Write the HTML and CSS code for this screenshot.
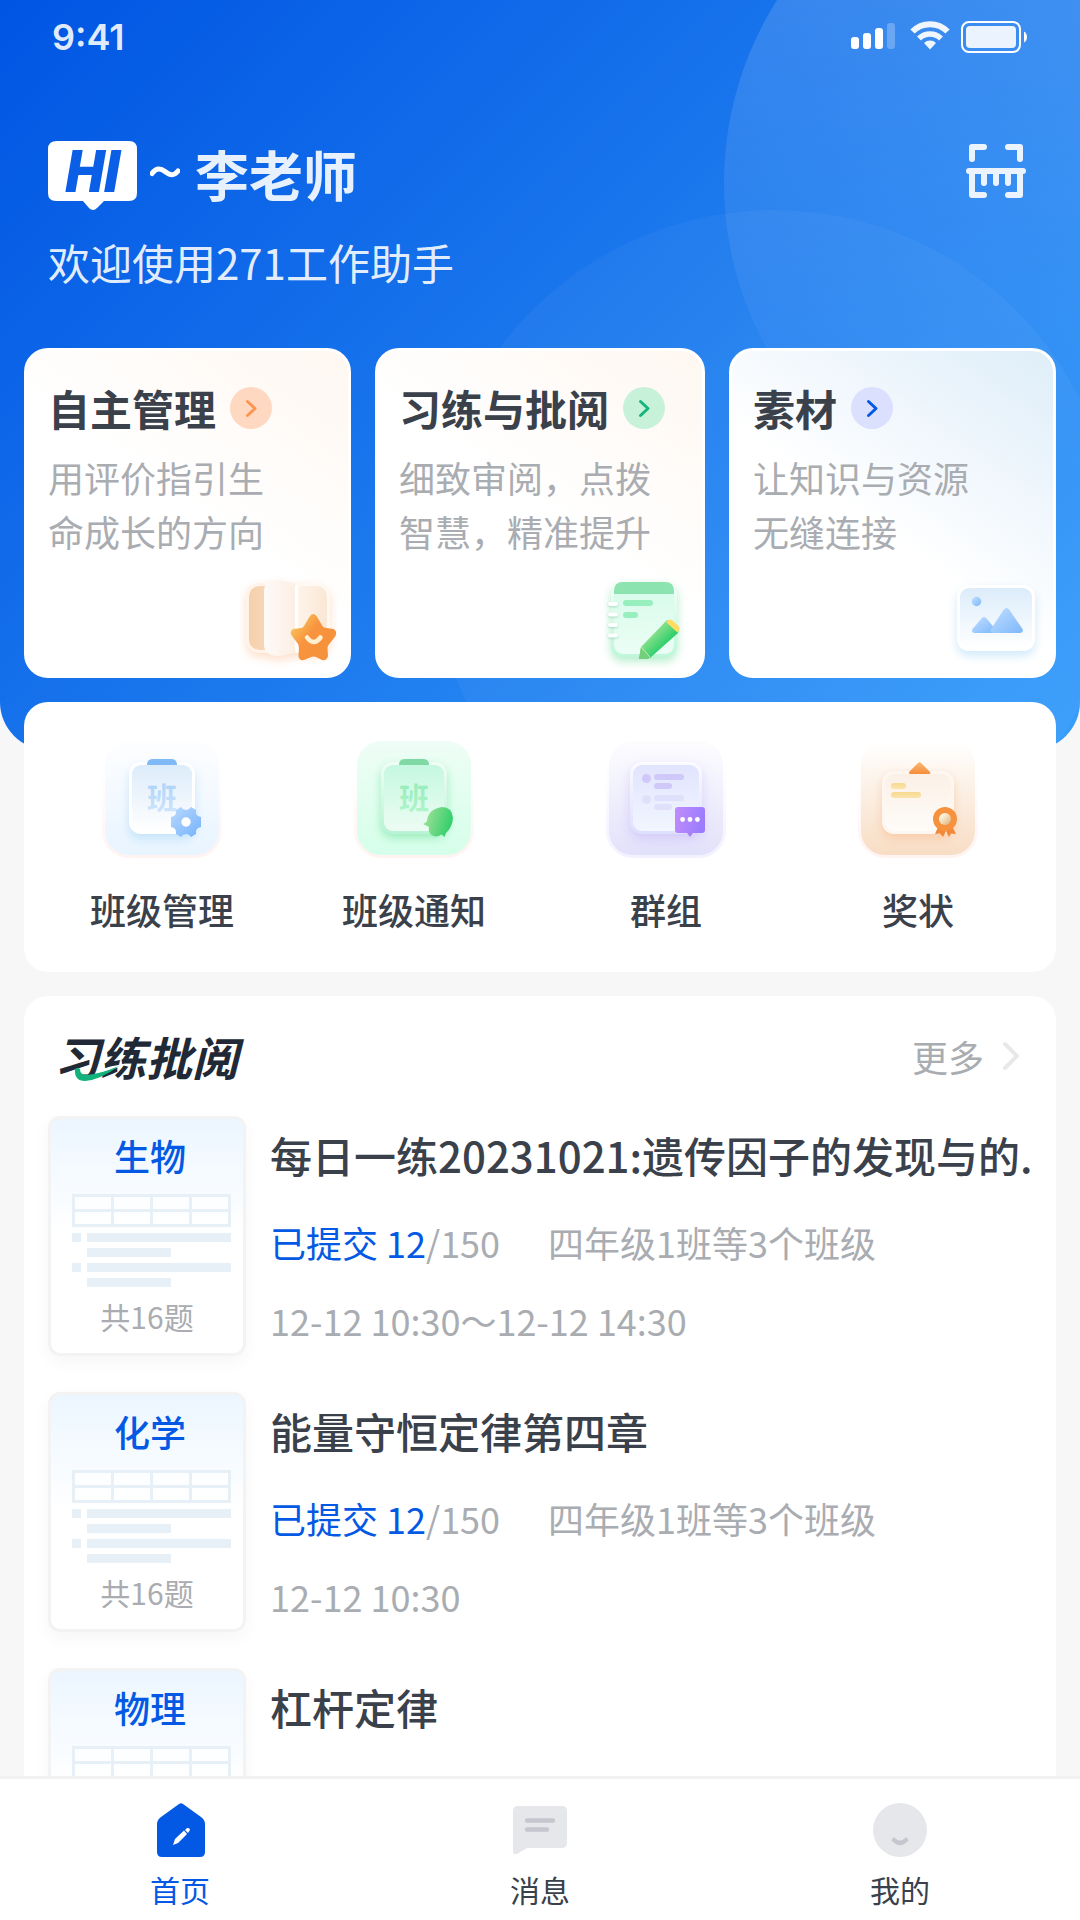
FILE: index.html
```html
<!DOCTYPE html>
<html lang="zh-CN">
<head>
<meta charset="utf-8">
<meta name="viewport" content="width=device-width, initial-scale=1">
<title>271工作助手</title>
<link rel="stylesheet" href="styles.css">
</head>
<body>
<div class="app">
  <main class="screen">
    <header class="hero">
      <div class="status">
        <span class="status-time">9:41</span>
        <svg class="status-icons" viewBox="0 0 178 36" aria-hidden="true">
          <g fill="#fff">
            <rect x="1" y="18" width="8" height="12" rx="3"/>
            <rect x="13" y="14" width="8" height="16" rx="3"/>
            <rect x="25" y="9" width="8" height="21" rx="3"/>
            <rect x="37" y="4" width="8" height="26" rx="3" opacity=".25"/>
          </g>
          <g fill="none" stroke="#fff" stroke-opacity=".92">
            <path d="M62.500 12.500a24.500 24.500 0 0 1 35 0" stroke-width="6"/>
            <path d="M69 19.500a15.500 15.500 0 0 1 22 0" stroke-width="5.500"/>
          </g>
          <path d="M74 24a8.500 8.500 0 0 1 12 0L80 30.500z" fill="#fff" fill-opacity=".92"/>
          <rect x="112" y="3" width="58" height="30" rx="7" fill="none" stroke="#fff" stroke-width="2"/>
          <rect x="116" y="7" width="50" height="22" rx="4" fill="#fff" fill-opacity=".9"/>
          <path d="M174 12.500q3 2 3 5.500t-3 5.500z" fill="#fff"/>
        </svg>
      </div>

      <div class="greeting">
        <svg class="hi" viewBox="0 0 90 72" role="img" aria-label="HI">
          <path d="M9 3h72q8 0 8 8v44q0 8-8 8H56l-7 7q-4 4-8 0l-6-7H8q-8 0-8-8V11q0-8 9-8z" fill="#fff"/>
          <text class="hi-text" x="18" y="53">HI</text>
        </svg>
        <svg class="tilde" viewBox="0 0 30 18" aria-hidden="true"><path d="M2 8.500C6 3 10 2.500 15 6.500S24 11 28 6" fill="none" stroke="#fff" stroke-width="5" stroke-linecap="round"/></svg>
        <h1 class="name">李老师</h1>
        <button class="scan" type="button" aria-label="扫一扫">
          <svg viewBox="0 0 60 60" fill="none" stroke="#fff" stroke-opacity=".9" stroke-width="6" stroke-linecap="round" stroke-linejoin="round"><path d="M6 15V3h12M42 3h12v12M3 27h54M6 28v23h12M42 51h12V28M18 28v11M30 28v11M42 28v11"/></svg>
        </button>
      </div>
      <p class="welcome">欢迎使用271工作助手</p>

      <nav class="cards" aria-label="功能">
        <a class="card card-warm" href="#manage">
          <span class="card-head"><span class="card-title">自主管理</span>
            <svg class="go go-orange" viewBox="0 0 42 42" aria-hidden="true"><circle cx="21" cy="21" r="21"/><path d="M17.500 14.500l7.500 7-7.500 7"/></svg></span>
          <span class="card-desc">用评价指引生<br>命成长的方向</span>
          <svg class="card-icon" viewBox="0 0 108 108" aria-hidden="true">
            <defs>
              <linearGradient id="book-back"><stop stop-color="#f5cfaa"/><stop offset="1" stop-color="#f9dfc8"/></linearGradient>
              <linearGradient id="book-page"><stop stop-color="#fdfaf8"/><stop offset="1" stop-color="#fdeee3"/></linearGradient>
              <linearGradient id="book-right"><stop stop-color="#fffaf5"/><stop offset="1" stop-color="#fae6d3"/></linearGradient>
              <linearGradient id="star" x1="0" y1=".2" x2=".6" y2=".7"><stop stop-color="#f8c960"/><stop offset=".6" stop-color="#f8943f"/><stop offset="1" stop-color="#f7923c"/></linearGradient>
            </defs>
            <g class="shadow-orange">
              <rect x="7.500" y="17.500" width="40" height="67" rx="12" fill="url(#book-back)" stroke="#fff3ea" stroke-width="3"/>
              <rect x="45" y="17.500" width="43.500" height="67" rx="12" fill="url(#book-right)" stroke="#fff9f4" stroke-width="3"/>
              <path d="M24 25q0-12 12-12 5 0 20 4v68q-12 4-18 4-14 0-14-12z" fill="url(#book-page)"/>
            </g>
            <path d="M56.500 18v66" stroke="#fff" stroke-width="3"/>
            <path d="M70 49q3-4 6.500 0l6 10q1 2 4 2l7 1q4 2 2 7l-7 9q-1 1-1 4l.5 7q-1 5-6 4l-6-3q-2.500-1-5 0l-7 3q-5 1-5.500-4l.5-8q0-2-1-4l-6-8q-3-4 1-7l8-1q2 0 3-2z" fill="url(#star)"/>
            <path d="M67 70.500q6.500 9 13.500 0" fill="none" stroke="#fff0d2" stroke-width="4.500" stroke-linecap="round"/>
          </svg>
        </a>
        <a class="card card-warm" href="#practice">
          <span class="card-head"><span class="card-title">习练与批阅</span>
            <svg class="go go-green" viewBox="0 0 42 42" aria-hidden="true"><circle cx="21" cy="21" r="21"/><path d="M17.500 14.500l7.500 7-7.500 7"/></svg></span>
          <span class="card-desc">细致审阅，点拨<br>智慧，精准提升</span>
          <svg class="card-icon" viewBox="0 0 108 108" aria-hidden="true">
            <defs>
              <linearGradient id="note" x2="0" y2="1"><stop stop-color="#d5fbea"/><stop offset="1" stop-color="#ecfdf5"/></linearGradient>
              <linearGradient id="note-edge" x2="0" y2="1"><stop stop-color="#f4fff9"/><stop offset="1" stop-color="#bdf7d9"/></linearGradient>
              <linearGradient id="pencil" x1=".2" y1=".3" x2=".6" y2=".7"><stop stop-color="#a7e595"/><stop offset="1" stop-color="#2dcf6c"/></linearGradient>
            </defs>
            <rect class="shadow-green" x="17" y="15" width="66" height="75" rx="12" fill="url(#note-edge)"/>
            <rect x="20" y="15" width="60" height="72" rx="9" fill="url(#note)"/>
            <path d="M20 27v-3q0-9 9-9h42q9 0 9 9v3z" fill="#8de3b0"/>
            <g fill="#97efbd"><rect x="29" y="33" width="30" height="6" rx="3"/><rect x="29" y="45" width="15" height="6" rx="3"/></g>
            <g class="shadow-ring" fill="#fff"><rect x="14" y="35" width="10" height="4" rx="2"/><rect x="14" y="45.500" width="10" height="4" rx="2"/><rect x="14" y="56" width="10" height="4" rx="2"/><rect x="14" y="66.500" width="10" height="4" rx="2"/></g>
            <path d="M45 92l2-12 25-26q2-2 4 0l8 8q1 2 0 4L56 91z" fill="url(#pencil)"/>
            <path d="M45 92l2-12 9 10-2 2z" fill="#73cf7c"/>
            <path d="M47 80l9 10" stroke="#c4f0b5" stroke-width="1"/>
            <path d="M73 54q2-2.500 5-1l6.500 6q2 3 0 5l-1 1.500-11-10z" fill="#ffdc63"/>
          </svg>
        </a>
        <a class="card card-cool" href="#material">
          <span class="card-head"><span class="card-title">素材</span>
            <svg class="go go-blue" viewBox="0 0 42 42" aria-hidden="true"><circle cx="21" cy="21" r="21"/><path d="M17.500 14.500l7.500 7-7.500 7"/></svg></span>
          <span class="card-desc">让知识与资源<br>无缝连接</span>
          <svg class="card-icon" viewBox="0 0 108 108" aria-hidden="true">
            <defs>
              <linearGradient id="photo" x2="0" y2="1"><stop stop-color="#dcecfa"/><stop offset="1" stop-color="#fff"/></linearGradient>
              <linearGradient id="peak" x2="1" y2="1"><stop stop-color="#c2deff"/><stop offset="1" stop-color="#7db8fb"/></linearGradient>
            </defs>
            <rect class="shadow-blue" x="12" y="18" width="78" height="66" rx="12" fill="#fff"/>
            <rect x="15" y="21" width="72" height="60" rx="9" fill="url(#photo)"/>
            <g fill="url(#peak)">
              <circle cx="31.500" cy="34.500" r="4.700"/>
              <path d="M36 52q3-4 6 0l9 11q1 3-2 3H29q-3-1-1.500-4z"/>
              <path d="M58.500 43q3-4 6 0l13 19q1.500 3-2 4H48q-4-1-2-4z"/>
            </g>
          </svg>
        </a>
      </nav>
    </header>

    <nav class="panel quick" aria-label="快捷入口">
      <a class="quick-item" href="#class">
        <svg class="tile" viewBox="0 0 120 120" aria-hidden="true">
          <defs>
            <linearGradient id="t1" x2="0" y2="1"><stop stop-color="#fefeff"/><stop offset="1" stop-color="#e8f4ff"/></linearGradient>
            <linearGradient id="rim" x2="0" y2="1"><stop offset=".3" stop-color="#fff3f1" stop-opacity="0"/><stop offset="1" stop-color="#fff3f1"/></linearGradient>
            <linearGradient id="ink1" x2="0" y2="1"><stop stop-color="#a5cdf8"/><stop offset="1" stop-color="#d5e8fc"/></linearGradient>
            <linearGradient id="gear" x2="1" y2="1"><stop stop-color="#bad9ff"/><stop offset="1" stop-color="#74b2fb"/></linearGradient>
          </defs>
          <rect width="120" height="120" rx="27" fill="url(#rim)"/>
          <rect x="3" y="3" width="114" height="114" rx="24" fill="url(#t1)"/>
          <rect class="shadow-blue" x="27" y="24" width="66" height="72" rx="12" fill="#fff"/>
          <path d="M45 27q0-6 6-6h18q6 0 6 6z" fill="#80b9f8"/>
          <rect x="30" y="27" width="60" height="66" rx="9" fill="url(#photo)"/>
          <text class="tile-char" x="45" y="71" fill="url(#ink1)">班</text>
          <path d="M79 69q2 3 5 3t5-3l5 3q-1 6 5 7v10q-6 1-5 7l-5 3q-2-3-5-3t-5 3l-5-3q1-6-5-7V79q6-1 5-7z" fill="url(#gear)"/>
          <circle cx="84" cy="84" r="4.700" fill="#fff"/>
        </svg>
        <span>班级管理</span>
      </a>
      <a class="quick-item" href="#notice">
        <svg class="tile" viewBox="0 0 120 120" aria-hidden="true">
          <defs>
            <linearGradient id="t2" x2="0" y2="1"><stop stop-color="#effdf6"/><stop offset="1" stop-color="#d5ffe9"/></linearGradient>
            <linearGradient id="board2" x2="0" y2="1"><stop stop-color="#c5f8e0"/><stop offset="1" stop-color="#edfcf4"/></linearGradient>
            <linearGradient id="edge2" x2="0" y2="1"><stop stop-color="#f2fdf7"/><stop offset="1" stop-color="#b8f3d5"/></linearGradient>
            <linearGradient id="ink2" x2="0" y2="1"><stop stop-color="#8deab5"/><stop offset="1" stop-color="#b5f6d0"/></linearGradient>
            <linearGradient id="bell" x2="1" y2=".3"><stop offset=".2" stop-color="#95df93"/><stop offset="1" stop-color="#35cf6d"/></linearGradient>
          </defs>
          <rect width="120" height="120" rx="27" fill="url(#rim)"/>
          <rect x="3" y="3" width="114" height="114" rx="24" fill="url(#t2)"/>
          <rect class="shadow-green" x="27" y="24" width="66" height="72" rx="12" fill="url(#edge2)"/>
          <path d="M45 27q0-6 6-6h18q6 0 6 6z" fill="#80d9a4"/>
          <rect x="30" y="27" width="60" height="66" rx="9" fill="url(#board2)"/>
          <text class="tile-char" x="45" y="71" fill="url(#ink2)">班</text>
          <path d="M88 69q10 0 11 11-.5 9-7 15l-1.500 4-3-2.500q-6 4-10.500 0-3-3-2-7.500l-6-3q3-1 4-3 1-12 15-14z" fill="url(#bell)"/>
        </svg>
        <span>班级通知</span>
      </a>
      <a class="quick-item" href="#group">
        <svg class="tile" viewBox="0 0 120 120" aria-hidden="true">
          <defs>
            <linearGradient id="t3" x2="0" y2="1"><stop stop-color="#fdfdff"/><stop offset="1" stop-color="#e2e1fa"/></linearGradient>
            <linearGradient id="rim3" x2="0" y2="1"><stop offset=".2" stop-color="#f3f1ff" stop-opacity="0"/><stop offset="1" stop-color="#f3f1ff"/></linearGradient>
            <linearGradient id="board3" x2="0" y2="1"><stop stop-color="#e1e4fd"/><stop offset="1" stop-color="#f1f6ff"/></linearGradient>
            <linearGradient id="edge3" x2="0" y2="1"><stop stop-color="#fcfcff"/><stop offset="1" stop-color="#dedffd"/></linearGradient>
            <linearGradient id="bubble" x2="1" y2=".3"><stop stop-color="#c28dfa"/><stop offset="1" stop-color="#9b7cfd"/></linearGradient>
          </defs>
          <rect width="120" height="120" rx="27" fill="url(#rim3)"/>
          <rect x="3" y="3" width="114" height="114" rx="24" fill="url(#t3)"/>
          <rect class="shadow-violet" x="24" y="24" width="72" height="72" rx="12" fill="url(#edge3)"/>
          <rect x="27" y="27" width="66" height="66" rx="9" fill="url(#board3)"/>
          <g fill="#d0c8f8"><circle cx="40.500" cy="40.500" r="4.500"/><rect x="48" y="36" width="30" height="6" rx="3"/><rect x="48" y="45" width="18" height="6" rx="3"/></g>
          <g fill="#e0e0fb"><circle cx="40.500" cy="61.500" r="4.500"/><rect x="48" y="57" width="30" height="6" rx="3"/><rect x="48" y="66" width="18" height="6" rx="3"/></g>
          <path d="M72 69h24q3 0 3 3v20q0 3-3 3h-9l-3 4-3-4h-9q-3 0-3-3V72q0-3 3-3z" fill="url(#bubble)"/>
          <g fill="#fff"><circle cx="76.600" cy="81.500" r="2.400"/><circle cx="84" cy="81.500" r="2.400"/><circle cx="91.400" cy="81.500" r="2.400"/></g>
        </svg>
        <span>群组</span>
      </a>
      <a class="quick-item" href="#award">
        <svg class="tile" viewBox="0 0 120 120" aria-hidden="true">
          <defs>
            <linearGradient id="t4" x2="0" y2="1"><stop stop-color="#fff"/><stop offset="1" stop-color="#f8ddc4"/></linearGradient>
            <linearGradient id="board4" x2="0" y2="1"><stop stop-color="#fcf0e6"/><stop offset="1" stop-color="#fefcf9"/></linearGradient>
            <linearGradient id="hook" x2="0" y2="1"><stop stop-color="#f9b777"/><stop offset="1" stop-color="#f58d38"/></linearGradient>
            <linearGradient id="gold" x2="0" y2="1"><stop stop-color="#f8d98f"/><stop offset="1" stop-color="#fae3ad"/></linearGradient>
            <linearGradient id="coin" x2="1" y2="1"><stop offset=".2" stop-color="#fff7e4"/><stop offset="1" stop-color="#dcae71"/></linearGradient>
          </defs>
          <rect width="120" height="120" rx="27" fill="url(#rim)"/>
          <rect x="3" y="3" width="114" height="114" rx="24" fill="url(#t4)"/>
          <rect class="shadow-orange" x="24" y="33" width="72" height="63" rx="12" fill="#fef7f1"/>
          <rect x="27" y="36" width="66" height="57" rx="9" fill="url(#board4)"/>
          <path d="M60 25q1.500-1.500 3 0l9 9q1 2-1 2H52q-2-1-.5-2.500z" fill="url(#hook)"/>
          <g fill="url(#gold)"><rect x="33" y="45" width="15" height="6" rx="3"/><rect x="33" y="54" width="30" height="6" rx="3"/></g>
          <path d="M80 89l-3 7 5-.5 3 3.500 3-6 3 6 2-3.500 5 .5-4-8z" fill="#f2893a"/>
          <circle cx="87" cy="81" r="12" fill="#f6923e"/>
          <circle cx="87" cy="81" r="6" fill="url(#coin)"/>
        </svg>
        <span>奖状</span>
      </a>
    </nav>

    <section class="panel reviews" aria-labelledby="reviews-title">
      <div class="reviews-head">
        <h2 class="reviews-title" id="reviews-title">习练批阅
          <svg class="swoosh" viewBox="0 0 45 16" aria-hidden="true"><path d="M1 4q3-2 5 0 0 6 7 6Q26 9 45 1 26 15 11 16 0 16 1 4z" fill="#12b27c"/></svg>
        </h2>
        <a class="more" href="#more">更多
          <svg viewBox="0 0 18 30" aria-hidden="true"><path d="M3 3l12 12L3 27" fill="none" stroke="#e8e8e8" stroke-width="4" stroke-linecap="round" stroke-linejoin="round"/></svg>
        </a>
      </div>
      <svg class="symbols" aria-hidden="true">
        <symbol id="sheet" viewBox="0 0 159 93">
          <path d="M1.500 1.500h156v30h-156zM1.500 16.500h156M40.500 1.500v30M79.500 1.500v30M118.500 1.500v30" fill="none" stroke="#e7eff7" stroke-width="3"/>
          <path d="M3 3h36v12H3zM42 3h36v12H42zM81 3h36v12H81zM120 3h36v12h-36zM3 18h36v12H3zM42 18h36v12H42zM81 18h36v12H81zM120 18h36v12h-36z" fill="#fff" fill-opacity=".5"/>
          <path d="M0 39h9v9H0zM15 39h144v9H15zM15 54h84v9H15zM0 69h9v9H0zM15 69h144v9H15zM15 84h84v9H15z" fill="#e7eff7"/>
        </symbol>
      </svg>
      <ul class="list">
        <li class="item">
          <div class="thumb"><span class="subject">生物</span><svg class="sheet" aria-hidden="true"><use href="#sheet"/></svg><span class="count">共16题</span></div>
          <div class="info">
            <h3 class="item-title">每日一练20231021:遗传因子的发现与的.</h3>
            <p class="meta"><span><span class="done">已提交 12</span>/150</span><span>四年级1班等3个班级</span></p>
            <p class="time">12-12 10:30～12-12 14:30</p>
          </div>
        </li>
        <li class="item">
          <div class="thumb"><span class="subject">化学</span><svg class="sheet" aria-hidden="true"><use href="#sheet"/></svg><span class="count">共16题</span></div>
          <div class="info">
            <h3 class="item-title">能量守恒定律第四章</h3>
            <p class="meta"><span><span class="done">已提交 12</span>/150</span><span>四年级1班等3个班级</span></p>
            <p class="time">12-12 10:30</p>
          </div>
        </li>
        <li class="item">
          <div class="thumb"><span class="subject">物理</span><svg class="sheet" aria-hidden="true"><use href="#sheet"/></svg></div>
          <div class="info">
            <h3 class="item-title">杠杆定律</h3>
          </div>
        </li>
      </ul>
    </section>
  </main>

  <nav class="tabs" aria-label="主导航">
    <a class="tab tab-active" href="#home" aria-current="page">
      <svg viewBox="0 0 54 54" aria-hidden="true"><path d="M26 1q2-1.500 4 0l18 13q4 3 4 7v28q0 5-5 5H9q-5 0-5-5V21q0-4 4-7z" fill="#0459e4"/><path d="M20 42l2-6 9-8.500 3 3.500-9 9zM32 27l2-2q3-.5 3 2l-2 3z" fill="#fff"/></svg>
      <span>首页</span>
    </a>
    <a class="tab" href="#message">
      <svg viewBox="0 0 54 54" aria-hidden="true"><path d="M5 3h44q5 0 5 5v32q0 5-5 5H14L4 51q-4 1-4-3V8q0-5 5-5z" fill="#e6e7eb"/><path d="M14 17.500h26M14 26.500h20" stroke="#c5c6ce" stroke-width="4.500" stroke-linecap="round"/></svg>
      <span>消息</span>
    </a>
    <a class="tab" href="#me">
      <svg viewBox="0 0 54 54" aria-hidden="true"><circle cx="27" cy="27" r="27" fill="#e6e7eb"/><path d="M21 37q6 6 12 0" fill="none" stroke="#c5c6ce" stroke-width="4.500" stroke-linecap="round"/></svg>
      <span>我的</span>
    </a>
  </nav>
</div>
</body>
</html>
```

FILE: styles.css
```css
* {
  box-sizing: border-box;
}

body,
h1,
h2,
h3,
p,
ul {
  margin: 0;
  padding: 0;
}

body {
  background: #f7f7f7;
  color: #3a414b;
  font-family: "Noto Sans CJK SC", "Noto Sans", sans-serif;
  font-size: 36px;
  line-height: 54px;
}

a {
  color: inherit;
  text-decoration: none;
}

svg {
  display: block;
  flex: none;
}

.app {
  display: flex;
  flex-direction: column;
  height: 100vh;
}

.screen {
  flex: 1;
  min-height: 0;
  overflow-y: auto;
  scrollbar-width: none;
}

/* Hero */
.hero {
  position: relative;
  overflow: hidden;
  padding: 0 24px 72px;
  border-radius: 0 0 48px 48px;
  background: linear-gradient(135deg, #0055e3 0%, #1b78ed 50%, #389efb 100%);
}

.hero::before,
.hero::after {
  content: "";
  position: absolute;
  width: 684px;
  height: 684px;
  border-radius: 50%;
}

.hero::before {
  top: -159px;
  right: -328px;
  background: linear-gradient(rgba(255, 255, 255, 0.18), rgba(255, 255, 255, 0) 95%);
}

.hero::after {
  top: 210px;
  right: -36px;
  background: rgba(255, 255, 255, 0.04);
}

.hero > * {
  position: relative;
  z-index: 1;
}

.status {
  display: flex;
  align-items: center;
  justify-content: space-between;
  height: 74px;
  padding: 0 28px;
  color: rgba(255, 255, 255, 0.9);
}

.status-time {
  font-family: Inter, sans-serif;
  font-size: 36px;
  font-weight: 600;
}

.status-icons {
  width: 178px;
  height: 36px;
}

.greeting {
  display: flex;
  align-items: center;
  margin-top: 61px;
  padding: 0 30px 0 24px;
}

.hi {
  width: 90px;
  height: 72px;
}

.hi-text {
  fill: #0b5fe6;
  stroke: #0b5fe6;
  stroke-width: 2px;
  font-family: "Liberation Sans Narrow", Roboto, sans-serif;
  font-size: 56px;
  font-style: italic;
  font-weight: 700;
}

.tilde {
  width: 30px;
  height: 18px;
  margin: 0 15px 0 12px;
}

.name {
  color: rgba(255, 255, 255, 0.9);
  font-size: 54px;
  font-weight: 700;
  line-height: 78px;
}

.scan {
  margin-left: auto;
  padding: 0;
  border: 0;
  background: none;
}

.scan svg {
  width: 60px;
  height: 60px;
}

.welcome {
  margin-top: 19px;
  padding: 0 24px;
  color: rgba(255, 255, 255, 0.9);
  font-size: 42px;
  line-height: 60px;
}

/* Feature cards */
.cards {
  display: grid;
  grid-template-columns: 109fr 110fr 109fr;
  gap: 24px;
  margin-top: 56px;
}

.card {
  display: flex;
  flex-direction: column;
  height: 330px;
  padding: 27px 0 0 21px;
  border: 3px solid #fff;
  border-radius: 24px;
}

.card-warm {
  background: linear-gradient(215deg, #fef7f1 0%, #fff 50%);
}

.card-cool {
  background: linear-gradient(215deg, #deeef8 0%, #edf5fc 25%, #fff 55%);
}

.card-head {
  display: flex;
  align-items: center;
  gap: 14px;
  height: 60px;
}

.card-title {
  font-size: 42px;
  font-weight: 700;
  line-height: 60px;
}

.go {
  width: 42px;
  height: 42px;
  fill: none;
  stroke-width: 3;
  stroke-linecap: round;
  stroke-linejoin: round;
}

.go circle {
  stroke: none;
}

.go-orange {
  stroke: #fb9550;
}

.go-orange circle {
  fill: #ffd8c2;
}

.go-green {
  stroke: #14b57c;
}

.go-green circle {
  fill: #c7f2d9;
}

.go-blue {
  stroke: #0459e4;
}

.go-blue circle {
  fill: #dbe0ff;
}

.card-desc {
  margin-top: 12px;
  color: #a9acb1;
}

.card-icon {
  align-self: flex-end;
  width: 108px;
  height: 108px;
  margin-top: auto;
}

.shadow-orange {
  filter: drop-shadow(0 4px 5px rgba(248, 160, 96, 0.35));
}

.shadow-green {
  filter: drop-shadow(0 4px 5px rgba(80, 214, 134, 0.45));
}

.shadow-blue {
  filter: drop-shadow(0 5px 5px rgba(120, 195, 240, 0.35));
}

.shadow-violet {
  filter: drop-shadow(0 5px 6px rgba(160, 120, 245, 0.25));
}

.shadow-ring {
  filter: drop-shadow(0 1px 1px rgba(60, 160, 110, 0.35));
}

/* White panels */
.panel {
  position: relative;
  z-index: 2;
  margin: 0 24px 24px;
  border-radius: 24px;
  background: #fff;
}

.quick {
  display: grid;
  grid-template-columns: repeat(4, 1fr);
  margin-top: -48px;
  padding: 36px 12px;
}

.quick-item {
  display: flex;
  flex-direction: column;
  align-items: center;
  gap: 24px;
  font-weight: 500;
}

.tile {
  width: 120px;
  height: 120px;
}

.tile-char {
  font-size: 30px;
  font-weight: 700;
}

.reviews {
  padding: 30px 24px 36px;
}

.reviews-head {
  display: flex;
  align-items: center;
  justify-content: space-between;
  height: 60px;
  padding: 0 12px 0 6px;
}

.reviews-title {
  position: relative;
  color: #222936;
  font-size: 46px;
  font-style: italic;
  font-weight: 700;
  line-height: 60px;
}

.swoosh {
  position: absolute;
  left: 20px;
  bottom: 5px;
  width: 45px;
  height: 16px;
}

.more {
  display: flex;
  align-items: center;
  gap: 18px;
  color: #a9acb1;
}

.more svg {
  width: 18px;
  height: 30px;
}

.symbols {
  position: absolute;
  width: 0;
  height: 0;
}

.list {
  display: grid;
  gap: 36px;
  margin-top: 30px;
  list-style: none;
}

.item {
  display: flex;
  gap: 24px;
}

.thumb {
  display: flex;
  flex: none;
  flex-direction: column;
  align-items: center;
  width: 198px;
  height: 240px;
  padding-top: 9px;
  border: 3px solid #f3f3f3;
  border-radius: 12px;
  background: linear-gradient(#ecf6ff, #fff 50%);
  box-shadow: 0 6px 18px rgba(0, 0, 0, 0.04);
}

.subject {
  margin-left: 6px;
  color: #0459e4;
  font-weight: 500;
}

.sheet {
  width: 159px;
  height: 93px;
  margin: 12px 0 7px 9px;
}

.count {
  color: #a9acb1;
  font-size: 30px;
  line-height: 45px;
}

.info {
  flex: 1;
  min-width: 0;
  padding-top: 9px;
}

.item-title {
  overflow: hidden;
  font-size: 42px;
  font-weight: 500;
  line-height: 60px;
  white-space: nowrap;
}

.meta {
  display: flex;
  gap: 48px;
  margin-top: 30px;
  color: #a9acb1;
}

.done {
  color: #0459e4;
}

.time {
  margin-top: 24px;
  color: #a9acb1;
}

/* Bottom tab bar */
.tabs {
  display: grid;
  grid-template-columns: repeat(3, 1fr);
  height: 144px;
  border-top: 3px solid #f2f2f2;
  background: #fff;
}

.tab {
  display: flex;
  flex-direction: column;
  align-items: center;
  gap: 10px;
  padding-top: 24px;
  font-size: 30px;
  line-height: 45px;
}

.tab svg {
  width: 54px;
  height: 54px;
}

.tab-active {
  color: #0459e4;
}
```
